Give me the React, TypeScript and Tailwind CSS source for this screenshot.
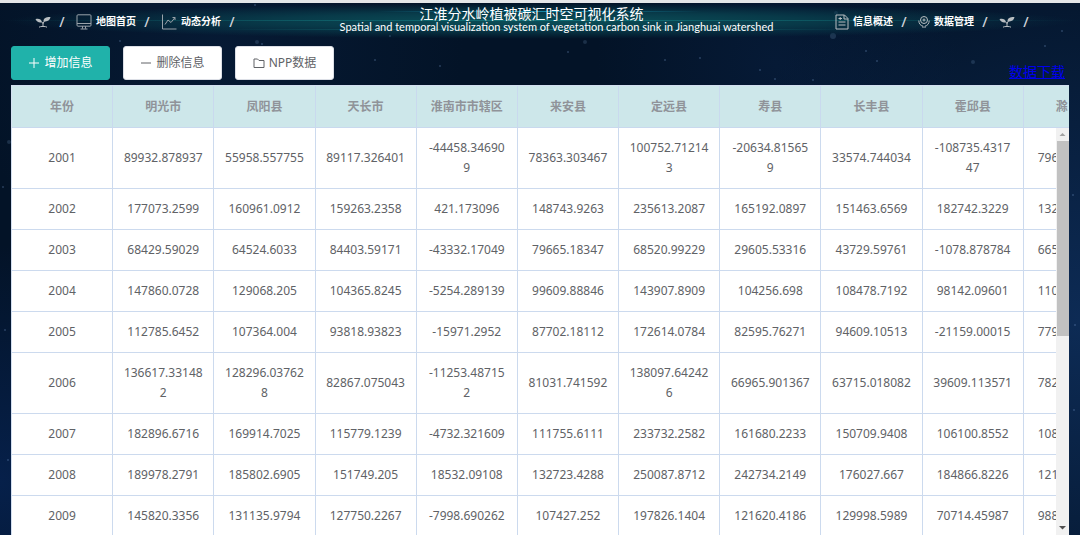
import type { ReactNode } from 'react';

const columns = ['年份', '明光市', '凤阳县', '天长市', '淮南市市辖区', '来安县', '定远县', '寿县', '长丰县', '霍邱县', '滁'];

const rows = [
  ['2001', '89932.878937', '55958.557755', '89117.326401', '-44458.346909', '78363.303467', '100752.712143', '-20634.815659', '33574.744034', '-108735.431747', '796'],
  ['2002', '177073.2599', '160961.0912', '159263.2358', '421.173096', '148743.9263', '235613.2087', '165192.0897', '151463.6569', '182742.3229', '132'],
  ['2003', '68429.59029', '64524.6033', '84403.59171', '-43332.17049', '79665.18347', '68520.99229', '29605.53316', '43729.59761', '-1078.878784', '665'],
  ['2004', '147860.0728', '129068.205', '104365.8245', '-5254.289139', '99609.88846', '143907.8909', '104256.698', '108478.7192', '98142.09601', '110'],
  ['2005', '112785.6452', '107364.004', '93818.93823', '-15971.2952', '87702.18112', '172614.0784', '82595.76271', '94609.10513', '-21159.00015', '779'],
  ['2006', '136617.331482', '128296.037628', '82867.075043', '-11253.487152', '81031.741592', '138097.642426', '66965.901367', '63715.018082', '39609.113571', '782'],
  ['2007', '182896.6716', '169914.7025', '115779.1239', '-4732.321609', '111755.6111', '233732.2582', '161680.2233', '150709.9408', '106100.8552', '108'],
  ['2008', '189978.2791', '185802.6905', '151749.205', '18532.09108', '132723.4288', '250087.8712', '242734.2149', '176027.667', '184866.8226', '121'],
  ['2009', '145820.3356', '131135.9794', '127750.2267', '-7998.690262', '107427.252', '197826.1404', '121620.4186', '129998.5989', '70714.45987', '988'],
];

const stars = [
  [255, 5, 1], [262, 44, 1], [257, 42, 2], [390, 36, 1], [375, 60, 1], [585, 42, 2], [568, 52, 1], [665, 60, 1],
  [836, 13, 2], [833, 36, 3], [866, 51, 1], [877, 61, 1], [813, 80, 1], [973, 62, 2], [760, 70, 1], [775, 79, 1],
  [9, 142, 2], [3, 187, 1], [1073, 195, 1], [1075, 325, 1], [1074, 410, 1], [1062, 31, 1], [940, 18, 1], [700, 58, 1],
  [440, 66, 1], [120, 41, 1], [1045, 46, 1], [5, 330, 1], [8, 460, 1],
];

function SproutIcon() {
  return (
    <svg width="16" height="12" viewBox="0 0 16 12" fill="none" aria-hidden="true">
      <path d="M.5 3.200C3 2.200 6.500 3 7 6.200 4 6.900 1.500 5.700.5 3.200Z" fill="#b9bec2" />
      <path d="M8.500 5.200C8.500 2 11.500.8 15.500 1 15 4 12.500 6.200 8.500 5.200Z" fill="#b9bec2" />
      <path d="M6.800 5.800 8 7.500 9.500 4.800M8 7v3.500M4 11.200c1-1 7-1 8 0" stroke="#b9bec2" />
    </svg>
  );
}

function MonitorIcon() {
  return (
    <svg width="16" height="16" viewBox="0 0 16 16" fill="none" stroke="#9aa3aa" aria-hidden="true">
      <rect x="1" y=".8" width="14" height="11.400" rx="1" />
      <path d="M1 9.500h14M6.500 12.200v2.500M9.500 12.200v2.500M4.500 15h7" />
    </svg>
  );
}

function ChartIcon() {
  return (
    <svg width="16" height="16" viewBox="0 0 16 16" fill="none" stroke="#9aa3aa" aria-hidden="true">
      <path d="M1.500.5v14.500h14" />
      <path d="M4 10.500 7 6l3 2.500L14 3.500M11.500 3.500H14V6" />
    </svg>
  );
}

function DocumentIcon() {
  return (
    <svg width="14" height="16" viewBox="0 0 14 16" fill="none" stroke="#b9bec2" aria-hidden="true">
      <path d="M1 1h8.500L13 4.500V15H1Z" />
      <path d="M9 1v4h4M3.500 8h7M3.500 11h7M3.500 4.500H7M5.200 3v3" />
    </svg>
  );
}

function DataIcon() {
  return (
    <svg width="12" height="14" viewBox="0 0 12 14" fill="none" stroke="#b9bec2" aria-hidden="true">
      <circle cx="6" cy="5" r="3.500" />
      <circle cx="6" cy="5" r="1" />
      <path d="M.8 5.500c0 3 1.700 5.200 4.200 5.700V13M11.200 5.500c0 3-1.700 5.200-4.200 5.700V13" />
    </svg>
  );
}

function NavItem({ icon, label }: { icon: ReactNode; label?: string }) {
  return (
    <li className="flex items-center">
      <a href="#" aria-label={label ?? '首页'} className="flex items-center gap-1 text-[10px] font-bold text-white">
        {icon}
        {label}
      </a>
      <span className="mr-[11px] ml-2 w-[6px] text-center text-sm leading-4 font-medium text-gray-300">/</span>
    </li>
  );
}

function ToolButton({ icon, label, primary }: { icon: ReactNode; label: string; primary?: boolean }) {
  return (
    <button
      type="button"
      className={`flex h-[34px] w-[99px] items-center justify-center gap-1 rounded-[3px] border text-xs ${
        primary ? 'border-[#20b2aa] bg-[#20b2aa] text-white' : 'border-[#dcdfe6] bg-white text-[#606266]'
      }`}
    >
      <svg width="12" height="12" viewBox="0 0 12 12" fill="none" stroke="currentColor" strokeWidth="1" aria-hidden="true">
        {icon}
      </svg>
      {label}
    </button>
  );
}

function Backdrop() {
  return (
    <div className="absolute inset-0 -z-10 overflow-hidden bg-[radial-gradient(circle_at_100%_60%,#0d2b55_0,transparent_35%),radial-gradient(circle_at_0%_90%,#06204a_0,transparent_20%),radial-gradient(circle_at_72%_12%,#061a36_0,transparent_20%),radial-gradient(circle_at_20%_10%,#061a34_0,transparent_25%)]">
      <svg className="h-full w-full" aria-hidden="true">
        {stars.map(([x, y, r]) => (
          <circle key={`${x}-${y}`} cx={x} cy={y} r={r} fill="#7fa3cf" opacity={r > 1 ? 0.2 : 0.3} />
        ))}
      </svg>
    </div>
  );
}

function Header() {
  return (
    <header className="relative flex h-10 items-center justify-between border-t-3 border-[#e4e6e8] pr-10 pl-[35px]">
      {/* Glow behind the title */}
      <div className="absolute inset-x-0 top-0 -z-10 h-9 bg-[radial-gradient(ellipse_at_50%_50%,#0b5059_0,#083a49_35%,transparent_70%)]">
        <div className="mt-2 h-px bg-linear-to-r from-transparent from-35% via-[#1689a8] to-transparent to-65%" />
        <div className="mt-2 h-px bg-linear-to-r from-transparent via-[#127077] to-transparent" />
        <div className="mt-2 h-px bg-linear-to-r from-transparent from-20% via-[#126a72] to-transparent to-80%" />
      </div>
      <ul className="flex items-center">
        <NavItem icon={<SproutIcon />} />
        <NavItem icon={<MonitorIcon />} label="地图首页" />
        <NavItem icon={<ChartIcon />} label="动态分析" />
      </ul>
      <div className="pb-[3px] pl-8 text-white">
        <h1 className="pr-[50px] text-center text-sm leading-[14px]">江淮分水岭植被碳汇时空可视化系统</h1>
        <p className="font-['Lato',sans-serif] text-[11px] leading-3">
          Spatial and temporal visualization system of vegetation carbon sink in Jianghuai watershed
        </p>
      </div>
      <ul className="flex items-center">
        <NavItem icon={<DocumentIcon />} label="信息概述" />
        <NavItem icon={<DataIcon />} label="数据管理" />
        <NavItem icon={<SproutIcon />} />
      </ul>
    </header>
  );
}

function Scrollbar() {
  return (
    <div className="absolute top-[43px] right-0 bottom-0 flex w-[13px] flex-col items-center bg-[#f1f1f1]" aria-hidden="true">
      <svg width="13" height="13" viewBox="0 0 13 13">
        <path d="M3.500 8 6.500 5l3 3Z" fill="#a3a3a3" />
      </svg>
      <div className="h-[48%] w-3 bg-[#c1c1c1]" />
      <svg className="mt-auto" width="13" height="15" viewBox="0 0 13 15">
        <path d="M3 6 6.500 9.500 10 6Z" fill="#505050" />
      </svg>
    </div>
  );
}

export default function App() {
  return (
    <div className="relative isolate flex h-screen flex-col overflow-hidden bg-[#031327] font-['Noto_Sans','Noto_Sans_CJK_SC',sans-serif]">
      <Backdrop />
      <Header />

      {/* Toolbar */}
      <div className="flex items-end justify-between px-[11px] pt-[6px] pb-[5px]">
        <div className="flex gap-[13px]">
          <ToolButton primary label="增加信息" icon={<path d="M6 1v10M1 6h10" />} />
          <ToolButton label="删除信息" icon={<path d="M1 6h10" />} />
          <ToolButton label="NPP数据" icon={<path d="M1 2h3.500L6 3.500h5V10.500H1Z" />} />
        </div>
        <a href="#" className="mr-1 text-sm leading-4 text-[#0000ee] underline">
          数据下载
        </a>
      </div>

      {/* Data table */}
      <div className="relative mx-[11px] min-h-0 flex-1 overflow-hidden bg-white">
        <table className="w-full min-w-[1114px] table-fixed border-separate border-spacing-0 border-t border-l border-[#d3dff0] text-center text-xs leading-5 text-[#606266]">
          <thead>
            <tr className="h-[42px] bg-[#cde7ea] text-[#909399]">
              {columns.map((name) => (
                <th key={name} scope="col" className="border-r border-b border-[#c9d9ee] px-[10px] font-bold last:pl-8 last:text-left">
                  {name}
                </th>
              ))}
            </tr>
          </thead>
          <tbody>
            {rows.map((row) => (
              <tr key={row[0]}>
                {row.map((value, i) => (
                  <td key={i} className="border-r border-b border-[#ccdaee] px-[10px] py-[10px] break-all last:pl-[14px] last:text-left">
                    {value}
                  </td>
                ))}
              </tr>
            ))}
          </tbody>
        </table>
        <Scrollbar />
      </div>
    </div>
  );
}
